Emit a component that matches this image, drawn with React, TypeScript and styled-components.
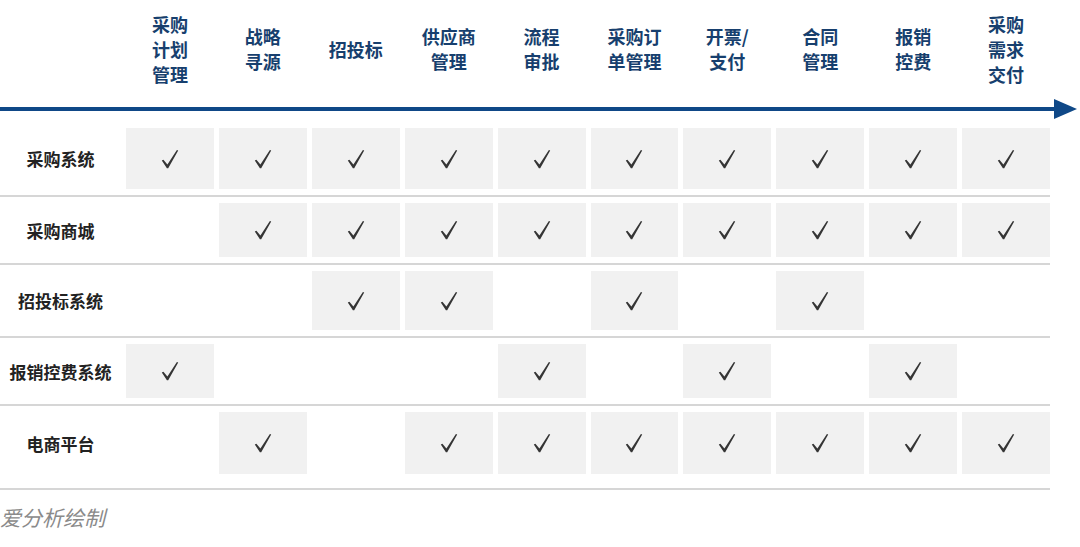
import { FC } from 'react';
import styled, { createGlobalStyle } from 'styled-components';

const GlobalStyle = createGlobalStyle`
  body {
    margin: 0;
    background: #ffffff;
    font-family: "Noto Sans CJK SC", "Noto Sans", sans-serif;
  }
`;

const stages = [
  ['采购', '计划', '管理'],
  ['战略', '寻源'],
  ['招投标'],
  ['供应商', '管理'],
  ['流程', '审批'],
  ['采购订', '单管理'],
  ['开票/', '支付'],
  ['合同', '管理'],
  ['报销', '控费'],
  ['采购', '需求', '交付'],
];

type RowData = { name: string; marks: number[]; height: number };

const rows: RowData[] = [
  { name: '采购系统', marks: [1, 1, 1, 1, 1, 1, 1, 1, 1, 1], height: 61 },
  { name: '采购商城', marks: [0, 1, 1, 1, 1, 1, 1, 1, 1, 1], height: 54 },
  { name: '招投标系统', marks: [0, 0, 1, 1, 0, 1, 0, 1, 0, 0], height: 59 },
  { name: '报销控费系统', marks: [1, 0, 0, 0, 1, 0, 1, 0, 1, 0], height: 54 },
  { name: '电商平台', marks: [0, 1, 0, 1, 1, 1, 1, 1, 1, 1], height: 62 },
];

const Page = styled.div`
  width: 1080px;
  height: 547px;
  overflow: hidden;
`;

const Columns = styled.div`
  display: grid;
  grid-template-columns: 121px repeat(10, 1fr);
  column-gap: 5px;
  width: 1050px;
`;

const Header = styled(Columns)`
  height: 98px;
  align-items: center;
`;

const StageLabel = styled.div`
  text-align: center;
  font-size: 18px;
  font-weight: 700;
  line-height: 25px;
  color: #173f6e;
`;

const ArrowBar = styled.div`
  display: flex;
  align-items: center;
  height: 22px;
  width: 1078px;
`;

const ArrowLine = styled.div`
  flex: 1;
  height: 4px;
  background: #0f4887;
`;

const Table = styled.div`
  margin-top: 2px;
`;

const Row = styled(Columns)`
  padding: 6px 0 6px;
  border-bottom: 2px solid #d6d6d6;
  align-items: stretch;

  &:last-child {
    padding-bottom: 14px;
  }
`;

const RowName = styled.div`
  display: flex;
  align-items: center;
  justify-content: center;
  font-size: 17px;
  font-weight: 700;
  color: #222222;
`;

const Cell = styled.div<{ $on: boolean; $h: number }>`
  height: ${({ $h }) => $h}px;
  display: flex;
  align-items: center;
  justify-content: center;
  background: ${({ $on }) => ($on ? '#f1f1f1' : 'transparent')};
`;

const Source = styled.div`
  margin-top: 12px;
  font-size: 21px;
  font-style: italic;
  color: #8a8a8a;
`;

const Check: FC = () => (
  <svg width="18" height="20" viewBox="0 0 18 20">
    <polygon
      points="0.8,11.6 2.4,10.7 6.4,15.6 15.9,0.9 17.2,1.6 7.2,19.2 5.9,19.2"
      fill="#353535"
    />
  </svg>
);

const Arrow: FC = () => (
  <ArrowBar>
    <ArrowLine />
    <svg width="24" height="22" viewBox="0 0 24 22">
      <polygon points="0,1 23,11 0,21" fill="#0f4887" />
    </svg>
  </ArrowBar>
);

export default function App() {
  return (
    <Page>
      <GlobalStyle />
      <Header>
        <div />
        {stages.map((lines, i) => (
          <StageLabel key={i}>
            {lines.map((l) => (
              <div key={l}>{l}</div>
            ))}
          </StageLabel>
        ))}
      </Header>
      <Arrow />
      <Table>
        {rows.map((r) => (
          <Row key={r.name}>
            <RowName>{r.name}</RowName>
            {r.marks.map((m, i) => (
              <Cell key={i} $on={m === 1} $h={r.height}>
                {m === 1 ? <Check /> : null}
              </Cell>
            ))}
          </Row>
        ))}
      </Table>
      <Source>爱分析绘制</Source>
    </Page>
  );
}
